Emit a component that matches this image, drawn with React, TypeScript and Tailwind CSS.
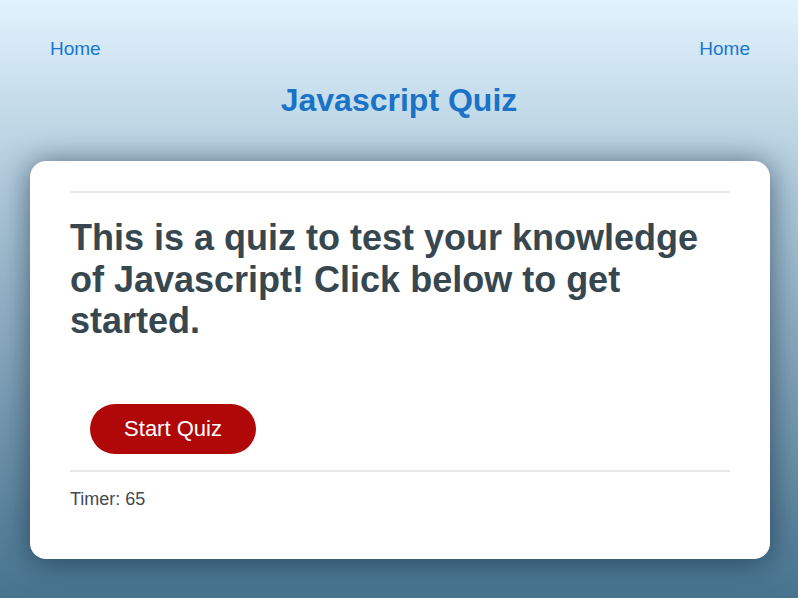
import React from 'react';

const App: React.FC = () => {
  return (
    <div
      className="min-h-[598px] w-full bg-gradient-to-b from-[#e1f3fe] to-[#47738f] font-['Liberation_Sans',Arial,sans-serif] pb-[39px]"
    >
      {/* Nav */}
      <nav className="flex justify-between pl-[50px] pr-[48px] pt-[38px] text-[19px] leading-[22px] text-[#1976d2]">
        <a href="#">Home</a>
        <a href="#">Home</a>
      </nav>

      <h1 className="mt-[22px] text-center text-[32px] font-bold leading-[37px] text-[#1a73c6]">
        Javascript Quiz
      </h1>

      {/* Quiz card */}
      <main className="ml-[30px] w-[740px] mt-[42px] rounded-[16px] bg-white px-[40px] pt-[30px] pb-[47px] shadow-[0_2px_30px_rgba(10,30,50,0.6)]">
        <hr className="border-t-2 border-[#e8e8e8]" />
        <h2 className="mt-[24px] text-[36px] font-bold leading-[41.5px] text-[#37474f]">
          This is a quiz to test your knowledge of Javascript! Click below to get started.
        </h2>
        <button className="ml-[20px] mt-[62px] h-[50px] w-[166px] rounded-full bg-[#b00808] text-[22px] text-white">
          Start Quiz
        </button>
        <hr className="mt-[16px] border-t-2 border-[#e8e8e8]" />
        <p className="mt-[14px] text-[18px] leading-[26px] text-[#3f4a54]">Timer: 65</p>
      </main>
    </div>
  );
};

export default App;
